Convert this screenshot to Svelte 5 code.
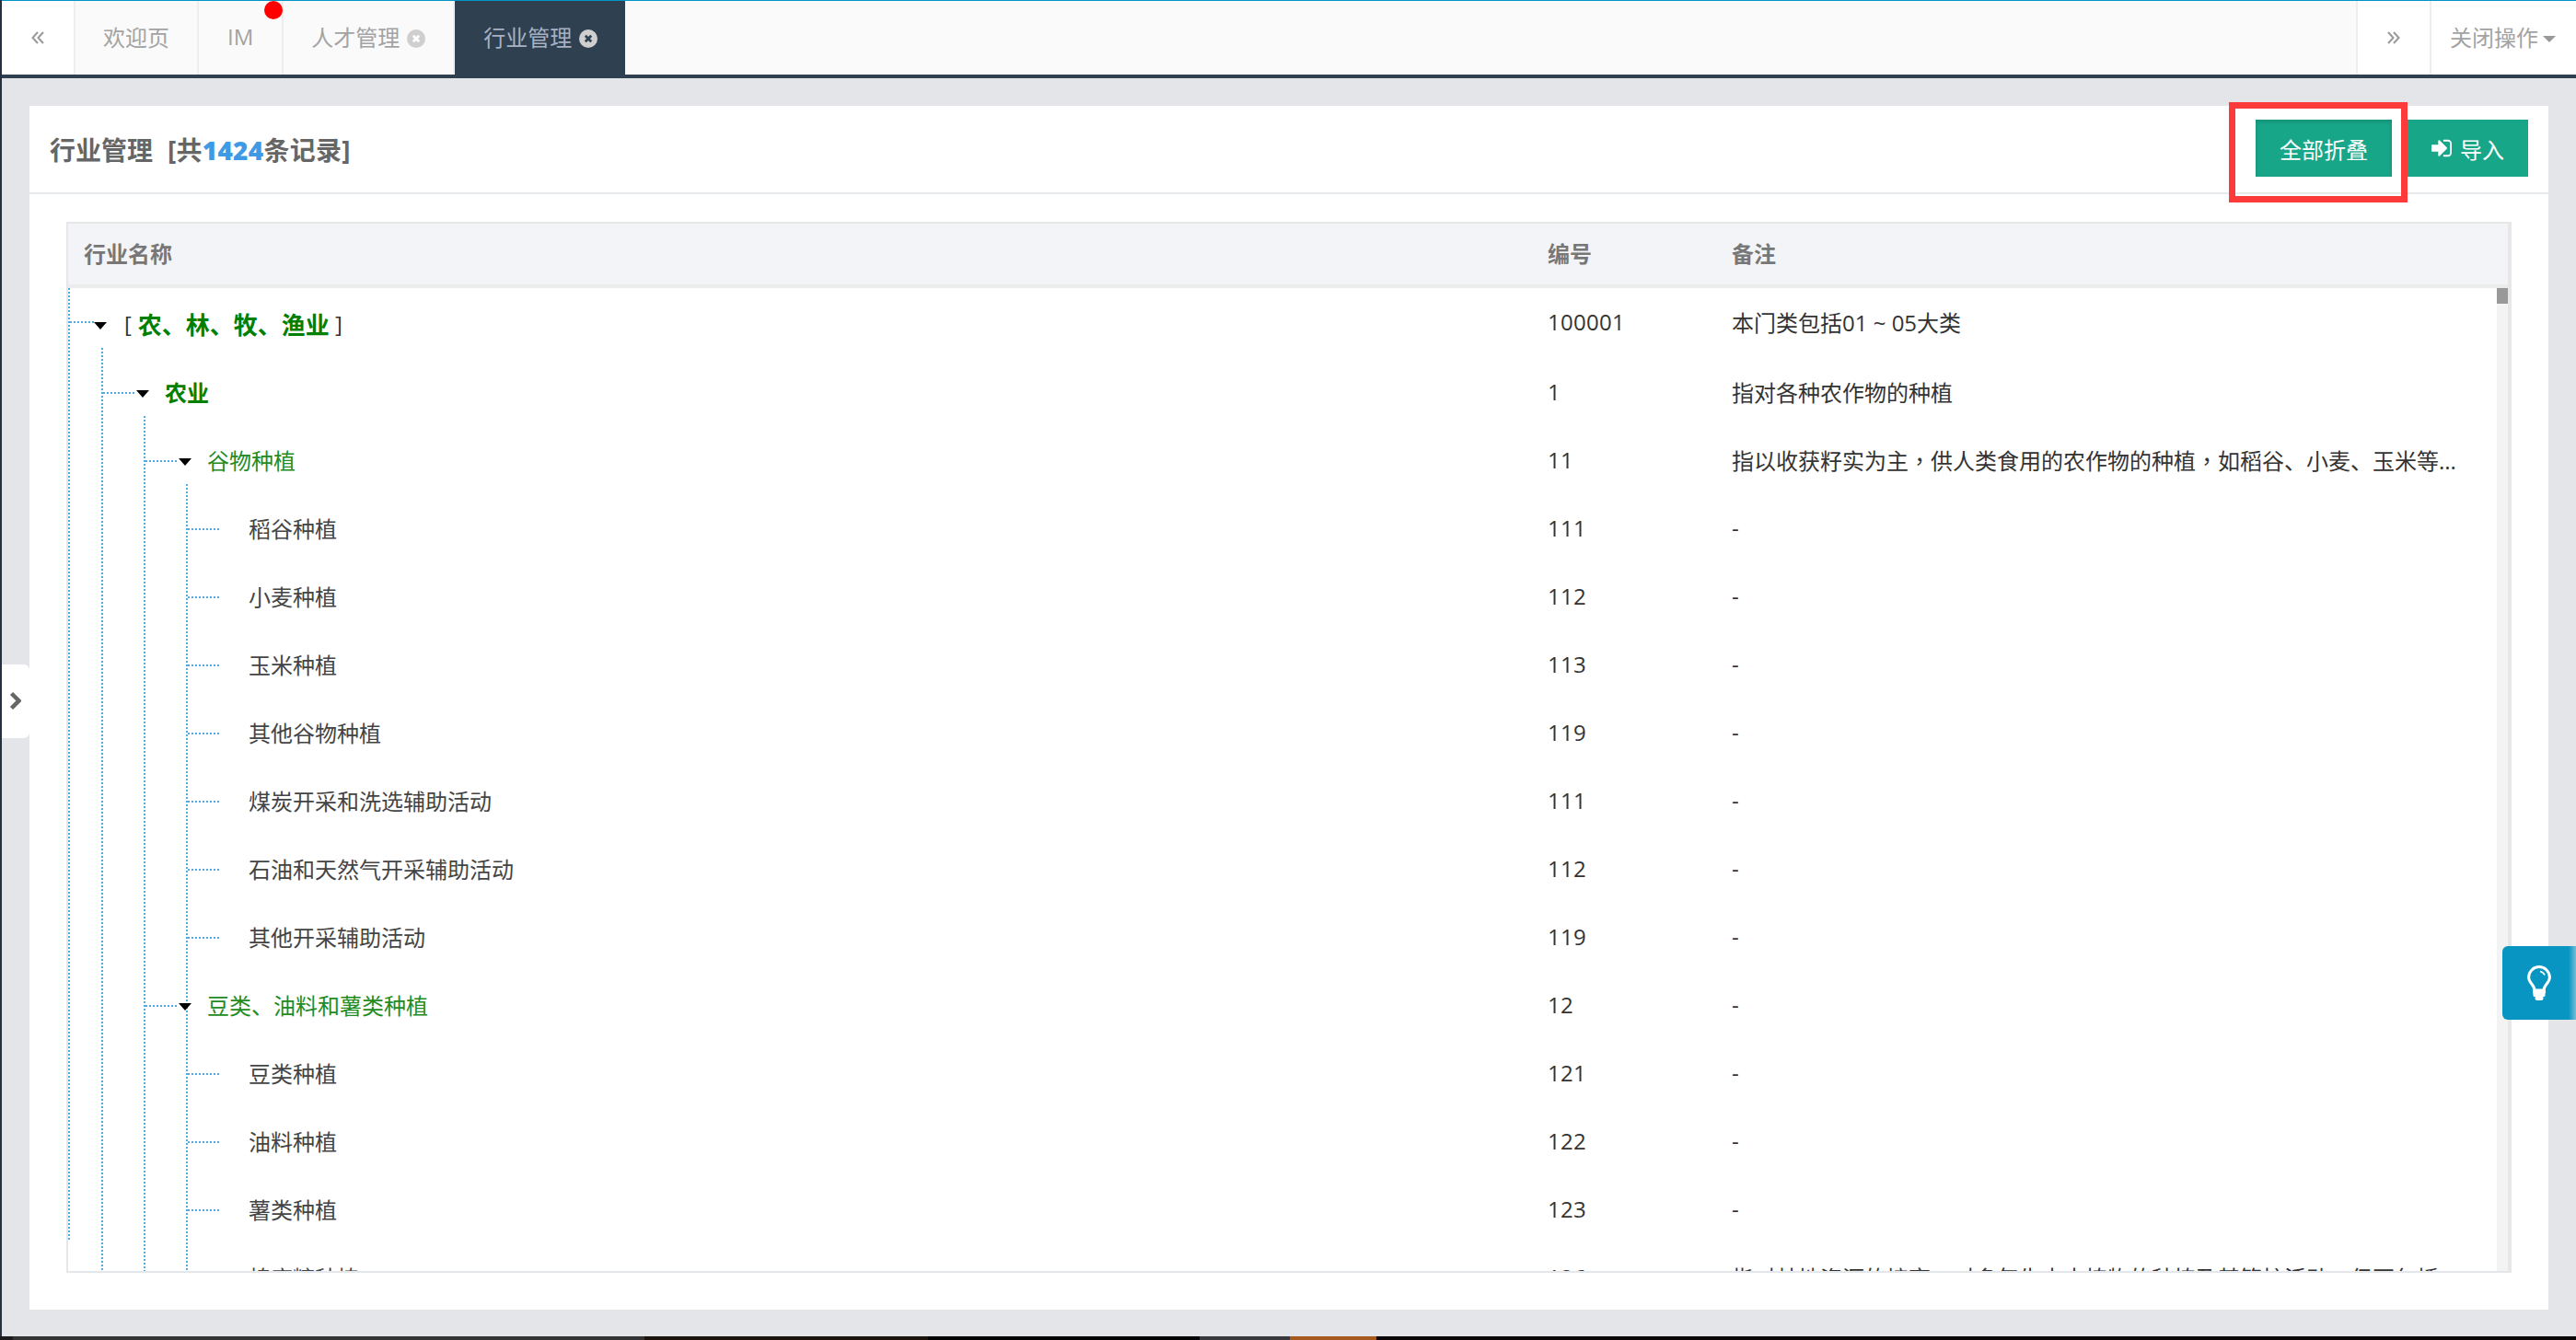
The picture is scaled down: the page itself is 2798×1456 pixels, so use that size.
<script>
  const rows = [
    { level: 0, name: '农、林、牧、渔业', code: '100001', note: '本门类包括01 ~ 05大类', h: 76 },
    { level: 1, name: '农业', code: '1', note: '指对各种农作物的种植', h: 75 },
    { level: 2, name: '谷物种植', code: '11', note: '指以收获籽实为主，供人类食用的农作物的种植，如稻谷、小麦、玉米等...', h: 74 },
    { level: 3, name: '稻谷种植', code: '111', note: '-', h: 74 },
    { level: 3, name: '小麦种植', code: '112', note: '-', h: 74 },
    { level: 3, name: '玉米种植', code: '113', note: '-', h: 74 },
    { level: 3, name: '其他谷物种植', code: '119', note: '-', h: 74 },
    { level: 3, name: '煤炭开采和洗选辅助活动', code: '111', note: '-', h: 74 },
    { level: 3, name: '石油和天然气开采辅助活动', code: '112', note: '-', h: 74 },
    { level: 3, name: '其他开采辅助活动', code: '119', note: '-', h: 74 },
    { level: 2, name: '豆类、油料和薯类种植', code: '12', note: '-', h: 74 },
    { level: 3, name: '豆类种植', code: '121', note: '-', h: 74 },
    { level: 3, name: '油料种植', code: '122', note: '-', h: 74 },
    { level: 3, name: '薯类种植', code: '123', note: '-', h: 74 },
    { level: 3, name: '棉麻糖种植', code: '126', note: '指对林地资源的培育，对多年生木本植物的种植及其管护活动，但不包括', h: 74 }
  ];
  const pad = [61, 105, 151, 196];
  const lineX = [2, 38, 84, 130];
  const vlines = [
    { left: 0, top: 0, height: 1035 },
    { left: 36, top: 65, height: 1003 },
    { left: 82, top: 139, height: 929 },
    { left: 128, top: 213, height: 727 },
    { left: 128, top: 805, height: 263 }
  ];
  const foot = [
    { w: 14, c: '#1c1c1c' }, { w: 686, c: '#333333' }, { w: 308, c: '#1a140d' }, { w: 295, c: '#030303' },
    { w: 98, c: '#38383c' }, { w: 94, c: '#a5591c' }, { w: 1303, c: '#0a0606' }
  ];
</script>

{#snippet closeIcon()}
  <svg class="close" viewBox="0 0 20 20"><circle cx="10" cy="10" r="10" fill="#cfcfcf"/><path d="M6.8 6.8l6.4 6.4M13.2 6.8l-6.4 6.4" stroke="var(--x)" stroke-width="2.8"/></svg>
{/snippet}

<div class="page">
  <div class="wrap">
    <header class="topbar">
      <button class="nav left" aria-label="向左">
        <svg viewBox="0 0 14 14" class="dbl"><path d="M7 1L1.5 7 7 13M13 1L7.5 7 13 13" /></svg>
      </button>
      <div class="tab">欢迎页</div>
      <div class="tab im">IM<span class="dot"></span></div>
      <div class="tab" style="--x:#fff">人才管理{@render closeIcon()}</div>
      <div class="tab active" style="--x:#2f4050">行业管理{@render closeIcon()}</div>
      <div class="spacer"></div>
      <button class="nav right" aria-label="向右">
        <svg viewBox="0 0 14 14" class="dbl"><path d="M1 1L6.5 7 1 13M7 1L12.5 7 7 13" /></svg>
      </button>
      <div class="closeops">关闭操作<span class="tcaret"></span></div>
    </header>

    <main class="main">
      <section class="card">
        <div class="card-head">
          <h1 class="title">行业管理<span class="count">[共<b>1424</b>条记录]</span></h1>
          <div class="actions">
            <button class="btn pressed">全部折叠</button>
            <button class="btn import">
              <svg class="signin" viewBox="0 0 1536 1536"><path transform="translate(0 -128)" d="M1184 896q0 26-19 45l-544 544q-19 19-45 19t-45-19-19-45v-288h-448q-26 0-45-19t-19-45v-384q0-26 19-45t45-19h448v-288q0-26 19-45t45-19 45 19l544 544q19 19 19 45zm352-352v704q0 119-84.5 203.5t-203.5 84.5h-320q-13 0-22.5-9.5t-9.5-22.5q0-4-1-20t-.5-26.5 3-23.5 10-19.5 20.5-6.5h320q66 0 113-47t47-113v-704q0-66-47-113t-113-47h-312l-11.5-1-11.5-3-8-5.5-7-9-2-13.5q0-4-1-20t-.5-26.5 3-23.5 10-19.5 20.5-6.5h320q119 0 203.5 84.5t84.5 203.5z" fill="#fff"/></svg>
              导入
            </button>
            <div class="redbox"></div>
          </div>
        </div>
        <div class="card-body">
          <div class="table">
            <div class="thead">
              <div class="th first">行业名称</div>
              <div class="th">编号</div>
              <div class="th">备注</div>
            </div>
            <div class="tbody">
              {#each vlines as v}
                <span class="vline" style="left:{v.left}px;top:{v.top}px;height:{v.height}px"></span>
              {/each}
              {#each rows as r, i}
                <div class="row" style="height:{r.h}px">
                  <div class="name lv{r.level}" style="padding-left:{pad[r.level]}px">
                    <span class="hline" style="left:{lineX[r.level]}px"></span>
                    {#if r.level < 3}<span class="caret" style="left:{lineX[r.level] + 26}px"></span>{/if}
                    {#if r.level === 0}
                      <span class="br">[</span><span class="nm">{r.name}</span><span class="br">]</span>
                    {:else}
                      <span class="nm">{r.name}</span>
                    {/if}
                  </div>
                  <div class="code">{r.code}</div>
                  <div class="note">{#each r.note.split('，') as part, j}{#if j}<span class="comma">，</span>{/if}{part}{/each}</div>
                </div>
              {/each}
              <span class="scroll"><i></i></span>
            </div>
          </div>
        </div>
      </section>
    </main>
  </div>
  <footer class="taskbar">
    {#each foot as f}<span style="width:{f.w}px;background:{f.c}"></span>{/each}
  </footer>

  <button class="toggle" aria-label="展开">
    <svg viewBox="0 0 13 21"><path d="M2.5 2.500L10.500 10.500 2.500 18.500" /></svg>
  </button>
  <button class="tip" aria-label="提示">
    <svg viewBox="0 0 26 38">
      <path d="M8 27C8 21 1.6 19 1.6 13A11.4 11.4 0 0 1 24.4 13C24.4 19 18 21 18 27Z" fill="none" stroke="#fff" stroke-width="3"/>
      <path d="M14 6.5A7 7 0 0 1 19 10.5" fill="none" stroke="#fff" stroke-width="1.6"/>
      <rect x="6" y="26" width="14" height="5" rx="1.5" fill="#fff"/>
      <rect x="6.500" y="30" width="13" height="4" rx="1.500" fill="#fff"/>
      <rect x="8.500" y="33" width="9" height="5" rx="2.500" fill="#fff"/>
    </svg>
  </button>
</div>

<style>
  :global(body) { margin: 0; background: #e4e5e8; }
  * { box-sizing: border-box; }
  .page {
    position: relative;
    width: 2798px;
    height: 1456px;
    overflow: hidden;
    display: flex;
    flex-direction: column;
    font-family: "Open Sans", "Noto Sans CJK SC", sans-serif;
    font-size: 24px;
    color: #333;
    background: #e4e5e8;
  }
  .wrap {
    flex: 1;
    min-height: 0;
    display: flex;
    flex-direction: column;
    border-left: 2px solid #263040;
  }
  button { font: inherit; border: 0; padding: 0; margin: 0; }

  .topbar {
    flex: 0 0 85px;
    display: flex;
    align-items: stretch;
    background: #fafafa;
    border-top: 1px solid #0095c4;
    border-bottom: 4px solid #2f4050;
    color: #a3a3a3;
  }
  .nav { background: #fff; display: flex; align-items: center; justify-content: center; }
  .nav.left { width: 80px; border-right: 2px solid #eee; }
  .nav.right { width: 80px; border-left: 2px solid #eee; }
  .dbl { width: 14px; height: 14px; fill: none; stroke: #999; stroke-width: 2; }
  .tab {
    position: relative;
    display: flex;
    align-items: center;
    gap: 8px;
    padding: 0 30px 3px;
    border-right: 2px solid #eee;
    white-space: nowrap;
  }
  .tab.im { padding: 0 31px 3px; }
  .tab.active { background: #2f4050; color: #a7b1c2; border-right: 0; padding: 0 30px 3px 31px; }
  .dot {
    position: absolute;
    top: 0;
    left: 71px;
    width: 20px;
    height: 20px;
    border-radius: 50%;
    background: #f00;
  }
  .close { width: 20px; height: 20px; display: block; margin-top: 4px; }
  .spacer { flex: 1; }
  .closeops {
    width: 159px;
    background: #fff;
    border-left: 2px solid #eee;
    padding: 0 0 3px 20px;
    display: flex;
    align-items: center;
    gap: 5px;
    white-space: nowrap;
  }
  .tcaret {
    width: 0;
    height: 0;
    border-left: 7.500px solid transparent;
    border-right: 7.500px solid transparent;
    border-top: 7px solid #999;
    margin-top: 5px;
  }

  .main { flex: 1; min-height: 0; padding: 30px 30px 29px; display: flex; }
  .card { flex: 1; background: #fff; display: flex; flex-direction: column; }
  .card-head {
    flex: 0 0 96px;
    display: flex;
    align-items: center;
    justify-content: space-between;
    padding: 0 22px 2px 22px;
    border-bottom: 2px solid #e7eaec;
  }
  .title { margin: 3px 0 0; font-size: 28px; font-weight: 700; color: #666; line-height: 1; white-space: nowrap; }
  .count { margin-left: 16px; letter-spacing: .25px; }
  .count b { color: #3f9ae5; }
  .actions { position: relative; display: flex; gap: 17px; }
  .btn {
    height: 62px;
    padding: 0 26px;
    background: #18a689;
    color: #fff;
    display: flex;
    align-items: center;
    white-space: nowrap;
  }
  .btn.pressed { box-shadow: inset 0 2px 5px rgba(0, 0, 0, .15); }
  .signin { width: 22px; height: 22px; margin-right: 9px; display: block; }
  .redbox {
    position: absolute;
    left: -29px;
    top: -19px;
    width: 194px;
    height: 109px;
    border: 7px solid #fd3a3a;
    pointer-events: none;
  }

  .card-body { flex: 1; min-height: 0; padding: 30px 40px 40px; display: flex; }
  .table {
    flex: 1;
    min-width: 0;
    display: flex;
    flex-direction: column;
    border: 2px solid #e7e7e7;
    border-right-width: 4px;
    border-bottom-color: #e3e6ea;
  }
  .thead {
    flex: 0 0 70px;
    display: grid;
    grid-template-columns: 1607px 200px 1fr;
    align-items: center;
    background: #f3f4f8;
    border-bottom: 4px solid #ececec;
  }
  .th { font-weight: 700; color: #777; padding-bottom: 3px; }
  .th.first { padding-left: 17px; }
  .tbody { flex: 1; min-height: 0; position: relative; overflow: hidden; }
  .row {
    display: grid;
    grid-template-columns: 1607px 200px 1fr;
    align-items: center;
  }
  .name { position: relative; height: 100%; display: flex; align-items: center; white-space: nowrap; padding-bottom: 3px; }
  .name.lv0 { padding-top: 1px; padding-bottom: 0; }
  .name.lv0 .nm { font-weight: 700; font-size: 26px; color: #008000; margin: 0 6px 0 7px; }
  .br { font-size: 24px; color: #333; }
  .name.lv1 .nm { font-weight: 700; color: #008000; }
  .name.lv2 .nm { color: #228b22; }
  .name.lv3 .nm { color: #444; }
  .hline {
    position: absolute;
    top: calc(50% - 1px);
    width: 36px;
    height: 2px;
    background: repeating-linear-gradient(90deg, #52aae2 0 2px, transparent 2px 4px);
  }
  .lv0 .hline { top: 36px; width: 26px; }
  .lv0 .caret { top: 37px; }
  .caret {
    position: absolute;
    top: calc(50% - 3px);
    width: 0;
    height: 0;
    border-left: 7px solid transparent;
    border-right: 7px solid transparent;
    border-top: 8px solid #000;
  }
  .lv1 .caret { margin-left: 10px; }
  .lv2 .caret { margin-left: 10px; }
  .vline {
    position: absolute;
    width: 2px;
    background: repeating-linear-gradient(180deg, #52aae2 0 2px, transparent 2px 4px);
  }
  .code, .note { white-space: nowrap; overflow: hidden; padding-bottom: 3px; }
  .code { letter-spacing: .3px; }
  .comma { font-family: "Noto Sans CJK TC", sans-serif; }
  .scroll {
    position: absolute;
    right: 0;
    top: 0;
    bottom: 0;
    width: 12px;
    background: #f3f3f3;
  }
  .scroll i { display: block; height: 17px; background: #999; }

  .taskbar { flex: 0 0 4px; display: flex; }
  .taskbar span { display: block; height: 4px; }

  .toggle {
    position: absolute;
    left: 2px;
    top: 722px;
    width: 30px;
    height: 80px;
    background: #fff;
    border-radius: 0 6px 6px 0;
    display: flex;
    align-items: center;
    justify-content: center;
    padding: 0 2px 2px 0;
  }
  .toggle svg { flex: none; width: 13px; height: 21px; fill: none; stroke: #666; stroke-width: 4.5; }
  .tip {
    position: absolute;
    right: 0;
    top: 1028px;
    width: 80px;
    height: 80px;
    border-radius: 6px 0 0 6px;
    background: linear-gradient(90deg, #0895c2 calc(100% - 8px), rgba(8, 149, 194, .5));
    display: flex;
    align-items: center;
    justify-content: flex-start;
    padding-left: 27px;
  }
  .tip svg { width: 26px; height: 38px; display: block; }
</style>
